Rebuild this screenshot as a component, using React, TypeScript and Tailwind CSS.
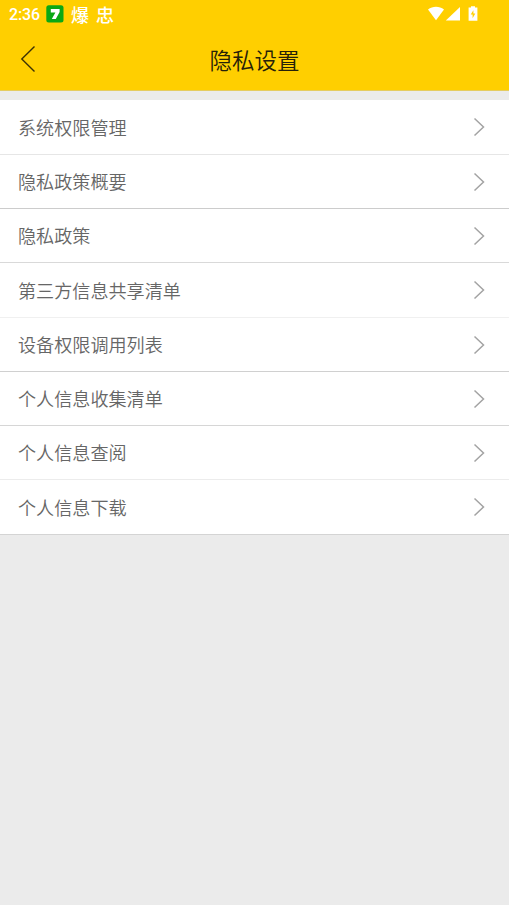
type Item = {
  label: string;
  height: string;
  line: string;
};

const ITEMS: Item[] = [
  { label: "系统权限管理", height: "h-[55px]", line: "border-[#e6e6e6]" },
  { label: "隐私政策概要", height: "h-[54px]", line: "border-[#cccccc]" },
  { label: "隐私政策", height: "h-[54px]", line: "border-[#d9d9d9]" },
  { label: "第三方信息共享清单", height: "h-[55px]", line: "border-[#f0f0f0]" },
  { label: "设备权限调用列表", height: "h-[54px]", line: "border-[#d0d0d0]" },
  { label: "个人信息收集清单", height: "h-[54px]", line: "border-[#d6d6d6]" },
  { label: "个人信息查阅", height: "h-[54px]", line: "border-[#ececec]" },
  { label: "个人信息下载", height: "h-[55px]", line: "border-[#d4d4d4]" },
];

function AppBadge() {
  return (
    <svg width="18" height="18" viewBox="0 0 18 18" className="ml-[5px]">
      <rect x="0.3" y="0.3" width="17.2" height="17.2" rx="2.5" fill="#0ba814" />
      <path d="M4.8 4h8.8v3L9.8 14H5.8l3.6-6.4H4.8z" fill="#fff" />
    </svg>
  );
}

function StatusIcons() {
  return (
    <svg width="54" height="18" viewBox="0 0 54 18" fill="#fff">
      <path d="M1 4.4C5.6.7 12.4.7 17 4.4L9 15.2z" />
      <path d="M33 2v13.6H18.8z" />
      <path
        fillRule="evenodd"
        d="M44 1.2h4v1.3h2.4v13.2h-8.8V2.5H44zM46.4 5.2L43.7 9.6h1.9v3.6l2.7-4.8h-1.9z"
      />
    </svg>
  );
}

function StatusBar() {
  return (
    <div className="flex h-7 items-center text-white">
      <span className="mt-px ml-[9px] w-8 font-[Roboto,sans-serif] text-base font-medium tracking-[-0.1px]">
        2:36
      </span>
      <AppBadge />
      <span className="mb-px ml-[7px] text-lg font-medium">爆</span>
      <span className="mb-px ml-[7px] text-lg font-medium">忠</span>
      <div className="mr-[28px] ml-auto">
        <StatusIcons />
      </div>
    </div>
  );
}

function Header() {
  return (
    <header className="h-[91px] border-b border-[#e5cc60] bg-[#ffcf00]">
      <StatusBar />
      <div className="grid h-[62px] grid-cols-[1fr_auto_1fr] items-center">
        <button type="button" aria-label="返回" className="pl-5">
          <svg width="16" height="28" viewBox="0 0 16 28" fill="none" stroke="#3d3205" strokeWidth="1.4">
            <path d="M14.5 1.5L1.8 14l12.7 12.5" />
          </svg>
        </button>
        <h1 className="pt-px text-[22.5px] font-[350] text-[#262109]">隐私设置</h1>
      </div>
    </header>
  );
}

function Row({ label, height, line }: Item) {
  return (
    <li className={`flex items-center justify-between border-b bg-white pr-6 pl-[18px] ${height} ${line}`}>
      <span className="pb-px text-[18.1px] leading-7 font-[350] text-[#666666]">{label}</span>
      <svg width="12" height="20" viewBox="0 0 12 20" fill="none" stroke="#a3a3a3" strokeWidth="1.5">
        <path d="M1.5 1.5L10.5 10l-9 8.5" />
      </svg>
    </li>
  );
}

export default function App() {
  return (
    <div className="min-h-screen bg-[#ebebeb] font-['Noto_Sans_CJK_SC',sans-serif]">
      <Header />
      <ul className="pt-[9px]">
        {ITEMS.map((item) => (
          <Row key={item.label} {...item} />
        ))}
      </ul>
    </div>
  );
}
